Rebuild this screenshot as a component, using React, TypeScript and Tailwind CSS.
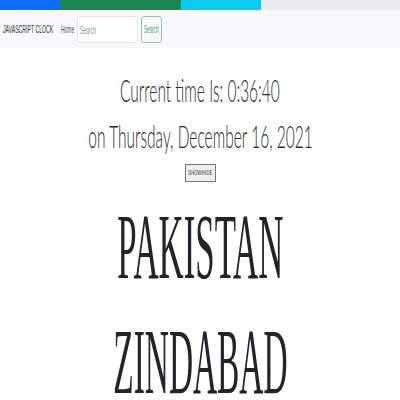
import React from "react";

const sans = { fontFamily: "'Liberation Sans', Arial, sans-serif" };
const light = { fontFamily: "Lato, 'Open Sans', sans-serif" };
const serif = { fontFamily: "'Liberation Serif', 'Times New Roman', serif" };

export default function App() {
  return (
    <div className="w-[400px] h-[400px] overflow-hidden bg-white text-[#212529]">
      {/* progress strip */}
      <div className="flex h-[10px] bg-[#e9ecef]">
        <div className="w-[60px] bg-[#0d6efd]" />
        <div className="w-[121px] bg-[#198754]" />
        <div className="w-[80px] bg-[#0dcaf0]" />
      </div>

      {/* navbar */}
      <nav className="flex h-[38px] items-center bg-[#f8f9fa] pl-[3px]" style={sans}>
        <div className="w-[51px] text-[11px] text-[#333] whitespace-nowrap">
          <span className="inline-block origin-left scale-x-[0.47]">JAVASCRIPT CLOCK</span>
        </div>
        <div className="ml-[7px] w-[13px] text-[11px] text-[#555] whitespace-nowrap">
          <span className="inline-block origin-left scale-x-[0.45]">Home</span>
        </div>
        <div className="relative ml-[3px] h-[27px] w-[61px]">
          <input
            aria-label="Search"
            className="h-full w-full rounded-[3px] border border-[#e3e6ea] bg-white outline-none"
          />
          <span className="pointer-events-none absolute left-[3px] top-[6px] origin-left scale-x-[0.46] whitespace-nowrap text-[11px] text-[#8a9096]">
            Search
          </span>
        </div>
        <button className="ml-[3px] flex h-[27px] w-[21px] items-center justify-center overflow-hidden rounded-[3px] border border-[#8fc7ab] text-[11px] text-[#4f9f78]">
          <span className="inline-block scale-x-[0.43] whitespace-nowrap">Search</span>
        </button>
      </nav>

      {/* clock */}
      <div className="mt-[19px] flex flex-col items-center font-light text-[31px] leading-[46px] text-[#2b2b2b]" style={light}>
        <div className="whitespace-nowrap scale-x-[0.5]">Current time Is: 0:36:40</div>
        <div className="whitespace-nowrap scale-x-[0.5]">on Thursday, December 16, 2021</div>
      </div>
      <div className="mt-[5px] flex justify-center" style={sans}>
        <button className="ml-[1px] flex h-[18px] w-[31px] items-center justify-center overflow-hidden border border-[#767676] bg-[#efefef] text-[7px] text-[#333]">
          <span className="inline-block scale-x-[0.6] whitespace-nowrap">SHOW/HIDE</span>
        </button>
      </div>

      {/* motto */}
      <div className="mt-[7px] flex flex-col items-center text-[94px]" style={serif}>
        <div className="whitespace-nowrap leading-[115px] scale-x-[0.37]">PAKISTAN</div>
        <div className="mt-[19px] whitespace-nowrap leading-[76px] scale-x-[0.355]">ZINDABAD</div>
      </div>
    </div>
  );
}
